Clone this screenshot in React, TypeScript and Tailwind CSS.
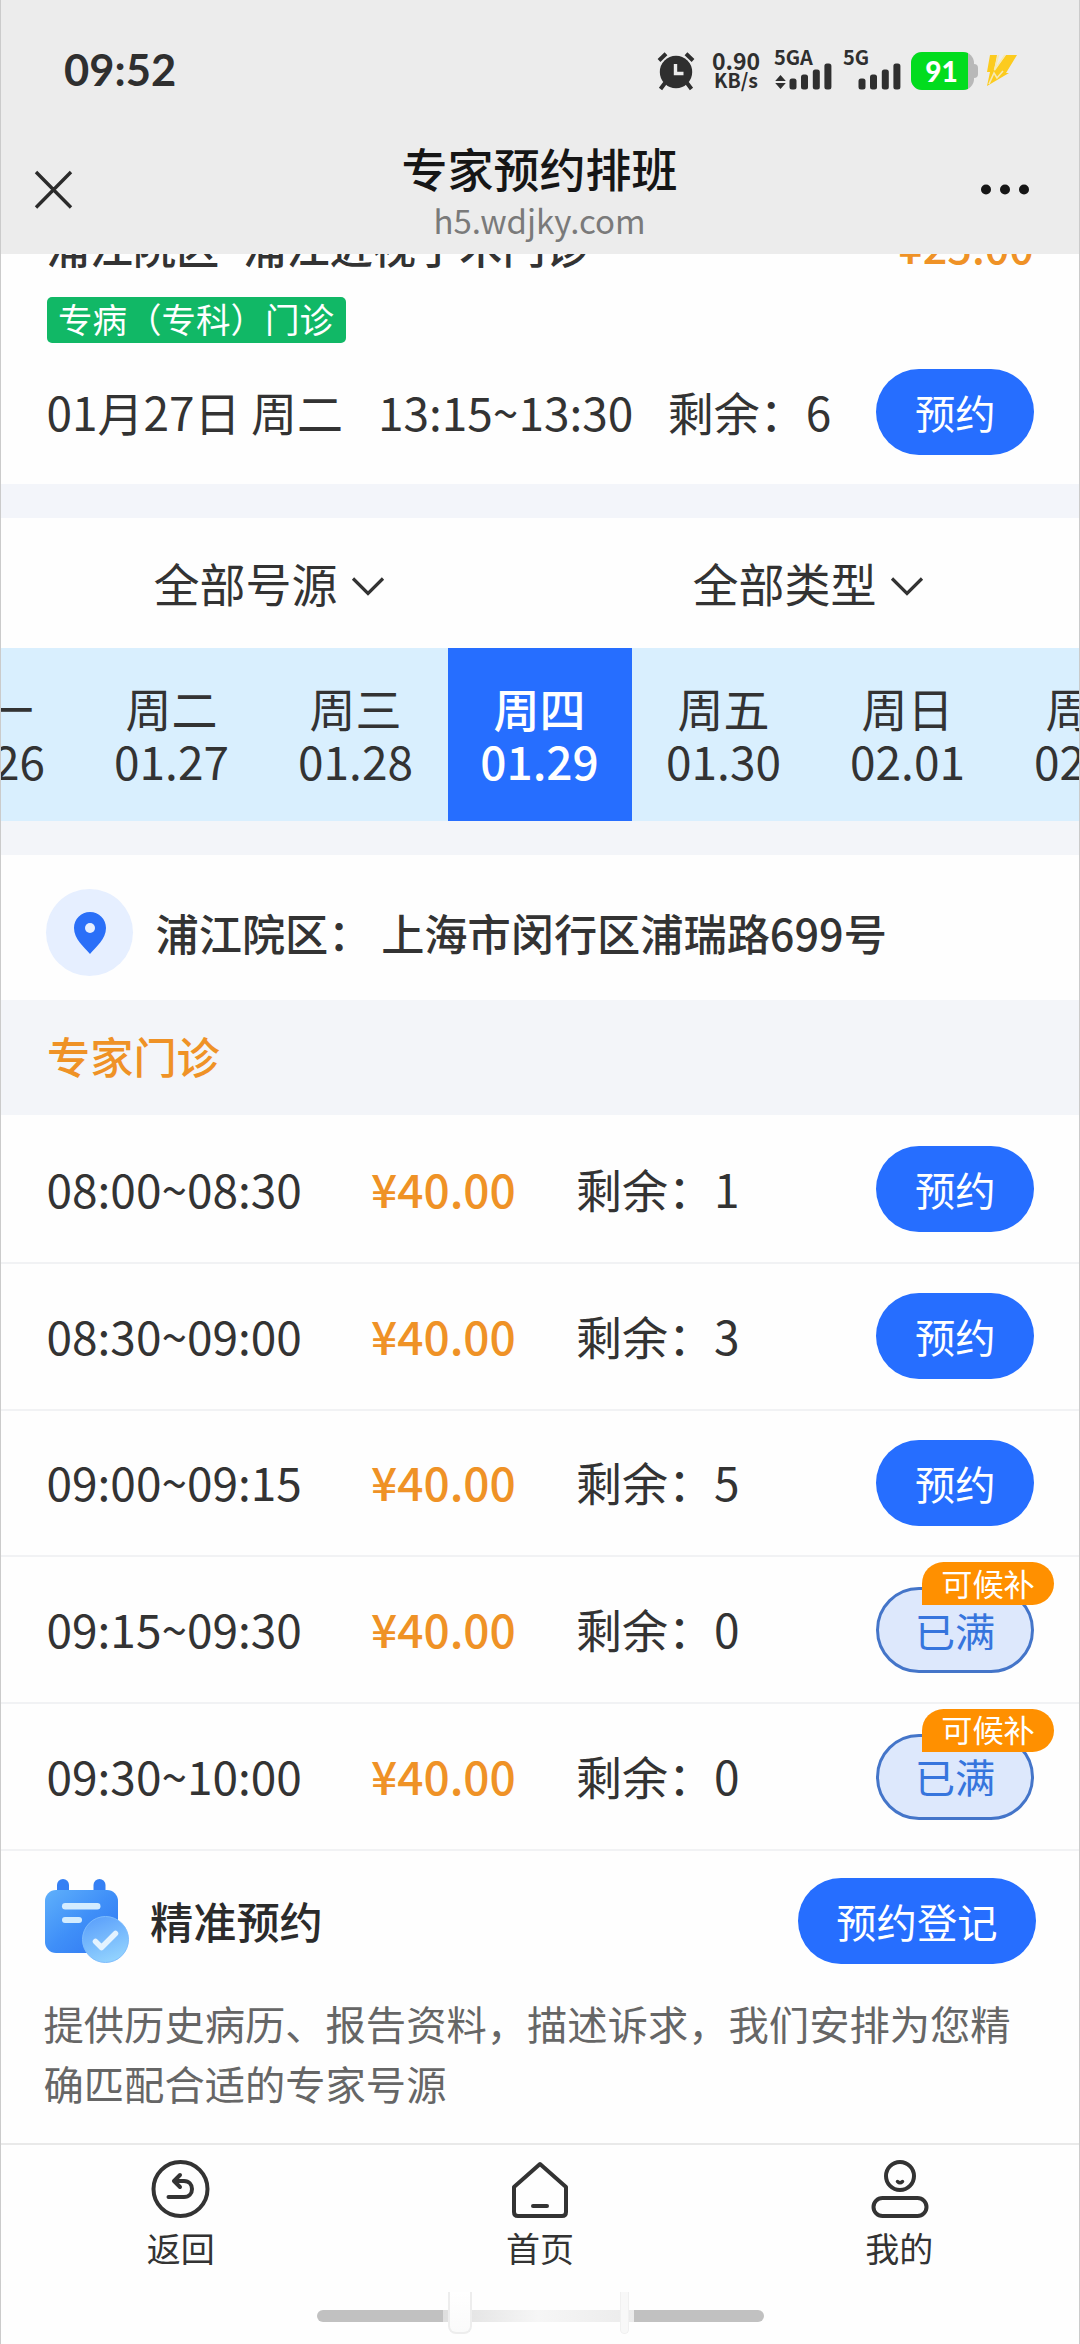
import React from "react";

const slots = [
  { time: "08:00~08:30", left: 1, full: false },
  { time: "08:30~09:00", left: 3, full: false },
  { time: "09:00~09:15", left: 5, full: false },
  { time: "09:15~09:30", left: 0, full: true },
  { time: "09:30~10:00", left: 0, full: true },
];

const days = [
  { day: "周一", date: "01.26" },
  { day: "周二", date: "01.27" },
  { day: "周三", date: "01.28" },
  { day: "周四", date: "01.29", active: true },
  { day: "周五", date: "01.30" },
  { day: "周日", date: "02.01" },
  { day: "周一", date: "02.02" },
];

function Alarm() {
  return (
    <svg width="38" height="40" viewBox="0 0 38 40" fill="none" stroke="#2f2f2f">
      <circle cx="19" cy="21" r="16.2" fill="#2f2f2f" stroke="none" />
      <path d="M2 9.5 L9 2.8 M36 9.5 L29 2.8" strokeWidth="4" />
      <path d="M8 32 L3.5 38 M30 32 L34.5 38" strokeWidth="4" />
      <path d="M18.5 13 V22.5 H26.5" stroke="#ececec" strokeWidth="3.4" />
    </svg>
  );
}

function Bars({ arrows }: { arrows?: boolean }) {
  return (
    <svg width="60" height="27" viewBox="0 0 60 27" fill="#2f2f2f">
      {arrows && <path d="M6.5 12 L11.8 18 H1.2Z M6.5 26 L11.8 20 H1.2Z" />}
      <rect x="15.5" y="15.5" width="7" height="11" rx="2.5" />
      <rect x="27" y="11.5" width="7" height="15" rx="2.5" />
      <rect x="38.8" y="6.5" width="7" height="20" rx="2.5" />
      <rect x="50.4" y="0.5" width="7" height="26" rx="2.5" />
    </svg>
  );
}

function StatusBar() {
  return (
    <div className="flex h-[142px] items-center justify-between pr-[60px] pl-[63px] text-[#2f2f2f]">
      <span className="-mt-[2px] font-['Lato'] text-[43.5px] leading-none font-bold">09:52</span>
      <div className="flex items-center">
        <Alarm />
        <div className="-mt-[4px] ml-[15px] flex w-[52px] flex-col items-center font-['Noto_Sans_CJK_SC'] font-bold">
          <span className="text-[23px] leading-[20px]">0.90</span>
          <span className="text-[19.5px] leading-[19px]">KB/s</span>
        </div>
        <div className="ml-[12px] flex h-[38px] w-[60px] flex-col">
          <span className="h-[11px] font-['Noto_Sans_CJK_SC'] text-[20px] leading-[10px] font-bold">5GA</span>
          <Bars arrows />
        </div>
        <div className="ml-[9px] flex h-[38px] w-[60px] flex-col">
          <span className="h-[11px] font-['Noto_Sans_CJK_SC'] text-[20px] leading-[10px] font-bold">5G</span>
          <Bars />
        </div>
        <div className="ml-[8px] flex items-center">
          <div className="flex h-[38px] w-[63px] overflow-hidden rounded-[11px] bg-[#b8b8b8]">
            <div className="flex w-[57px] items-center justify-center bg-[#02dc1e] pb-[1px] pl-[4px] font-['Lato'] text-[28px] leading-none font-black text-white">
              91
            </div>
          </div>
          <div className="h-[14px] w-[4px] rounded-r-[4px] bg-[#b8b8b8]" />
        </div>
        <svg className="-mt-[2px] ml-[7px]" width="34" height="34" viewBox="0 0 34 34">
          <path d="M5 2 H12 L9 18 L21 2 H32 L21 20 H24 L2 33 L5 19 H2Z" fill="#fccb1e" />
          <path d="M13.5 2 L9.5 17 L20 2 M4 31 L9 20 L12 25 L18 18" fill="none" stroke="#f6e9b4" strokeWidth="1.6" />
        </svg>
      </div>
    </div>
  );
}

function TitleBar() {
  return (
    <div className="flex h-[112px] items-start justify-between px-[32px]">
      <svg className="mt-[27px]" width="42" height="42" viewBox="0 0 42 42" fill="none" stroke="#2b2b2b" strokeWidth="3.4">
        <path d="M3 3 L38 38.500 M38 3 L3 38.500" />
      </svg>
      <div className="flex flex-col items-center pl-[24px]">
        <h1 className="text-[46px] leading-[50px] font-medium text-[#161616]">专家预约排班</h1>
        <span className="text-[33px] leading-[57px] text-[#7a7a7a]">h5.wdjky.com</span>
      </div>
      <svg className="mt-[41px] mr-[17px]" width="50" height="14" viewBox="0 0 50 14" fill="#161616">
        <circle cx="6" cy="6.5" r="5" />
        <circle cx="25" cy="6.5" r="5" />
        <circle cx="44" cy="6.5" r="5" />
      </svg>
    </div>
  );
}

function BookButton({ children }: { children: React.ReactNode }) {
  return (
    <button className="flex h-[86px] items-center justify-center rounded-full bg-[#266eff] px-[38.5px] text-[40.3px] leading-none text-white">
      {children}
    </button>
  );
}

function FullButton() {
  return (
    <div className="relative">
      <button className="flex h-[86px] w-[158px] items-center justify-center rounded-full border-[3px] border-[#4475c9] bg-[#dde8fc] text-[40.3px] leading-none text-[#3675dd]">
        已满
      </button>
      <span className="absolute -top-[25px] left-[46px] flex h-[43px] w-[132px] items-center justify-center rounded-[22px] rounded-bl-none bg-[#ff9000] pb-[2px] text-[31.2px] leading-none text-white">
        可候补
      </span>
    </div>
  );
}

function Filter({ label }: { label: string }) {
  return (
    <div className="flex flex-1 items-center justify-center gap-[13px] pr-[3px] pb-[2px]">
      <span className="text-[46px] leading-none">{label}</span>
      <svg className="mt-[9px]" width="34" height="22" viewBox="0 0 34 22" fill="none" stroke="#333" strokeWidth="3.2">
        <path d="M2 2.5 L17 17.5 L32 2.5" />
      </svg>
    </div>
  );
}

function CalendarIcon() {
  return (
    <svg width="86" height="86" viewBox="0 0 86 86">
      <defs>
        <linearGradient id="sheet" x1="0" y1="0" x2="1" y2="1">
          <stop offset="0" stopColor="#5fb0fb" />
          <stop offset="0.5" stopColor="#3f8ff8" />
          <stop offset="1" stopColor="#2f76f2" />
        </linearGradient>
        <linearGradient id="seal" x1="0.2" y1="0" x2="0.6" y2="1">
          <stop offset="0" stopColor="#5a9ffb" />
          <stop offset="1" stopColor="#93d3fe" />
        </linearGradient>
      </defs>
      <rect x="13" y="1" width="12" height="20" rx="6" fill="#3580f4" />
      <rect x="49.5" y="1" width="12" height="20" rx="6" fill="#3580f4" />
      <rect x="1" y="12" width="73" height="63" rx="11" fill="url(#sheet)" />
      <rect x="18" y="25" width="38.500" height="6.500" rx="3.200" fill="#d3ecff" />
      <rect x="18" y="39" width="20" height="6" rx="3" fill="#d3ecff" />
      <circle cx="61.500" cy="61.500" r="23" fill="url(#seal)" stroke="#7dbcfd" strokeWidth="1" />
      <path d="M51.500 63.500 L57.500 69.500 L71.500 55.500" fill="none" stroke="#e4f3ff" strokeWidth="5.500" strokeLinecap="round" strokeLinejoin="round" />
    </svg>
  );
}

function NavItem({ label, children }: { label: string; children: React.ReactNode }) {
  return (
    <div className="flex flex-1 flex-col items-center pt-[14px]">
      <svg width="62" height="62" viewBox="0 0 62 62" fill="none" stroke="#333" strokeWidth="4" strokeLinejoin="round" strokeLinecap="round">
        {children}
      </svg>
      <span className="mt-[6px] text-[34px] leading-[42px]">{label}</span>
    </div>
  );
}

export default function App() {
  return (
    <div className="flex h-[2344px] w-[1080px] flex-col overflow-hidden border-x border-[#cbcbcb] bg-[#fefefe] font-['Noto_Sans_CJK_SC',sans-serif] text-[#333]">
      <header className="relative z-10 h-[254px] shrink-0 bg-[#ececec]">
        <StatusBar />
        <TitleBar />
      </header>

      <section className="h-[230px] shrink-0 pr-[45px] pl-[45.5px]">
        <div className="-mt-[38px] flex h-[60px] items-center justify-between text-[43.2px] leading-none font-medium">
          <div className="flex gap-[24px]">
            <span>浦江院区</span>
            <span>浦江近视手术门诊</span>
          </div>
          <span className="text-[#ef9226]">¥25.00</span>
        </div>
        <div className="mt-[21px] flex h-[46px] w-[299px] items-center justify-center rounded-[5px] bg-[#11b866] pb-[3px] text-[34.5px] leading-none text-white">
          专病（专科）门诊
        </div>
        <div className="mt-[26px] flex h-[86px] items-center text-[46px] leading-none">
          <span className="-mt-[3px]">01月27日 周二</span>
          <span className="-mt-[3px] ml-[35px]">13:15~13:30</span>
          <span className="-mt-[3px] ml-[34.5px]">剩余：6</span>
          <div className="ml-auto">
            <BookButton>预约</BookButton>
          </div>
        </div>
      </section>

      <div className="h-[34px] shrink-0 bg-[#f3f5fa]" />

      <section className="flex h-[130px] shrink-0">
        <Filter label="全部号源" />
        <Filter label="全部类型" />
      </section>

      <section className="flex h-[173px] shrink-0 justify-center overflow-hidden bg-[#d9effe]">
        {days.map((d, i) => (
          <div
            key={i}
            className={
              d.active
                ? "flex w-[184px] shrink-0 flex-col items-center bg-[#266eff] pt-[33px] pr-[1px] text-[46px] leading-[53px] font-medium text-white"
                : "flex w-[184px] shrink-0 flex-col items-center pt-[33px] pr-[1px] text-[46px] leading-[53px]"
            }
          >
            <span>{d.day}</span>
            <span>{d.date}</span>
          </div>
        ))}
      </section>

      <div className="h-[34px] shrink-0 bg-[#f3f5f9]" />

      <section className="flex h-[145px] shrink-0 items-center pt-[10px] pl-[45px]">
        <div className="flex size-[87px] items-center justify-center rounded-full bg-[#e6efff]">
          <svg width="34" height="44" viewBox="0 0 34 44">
            <path d="M17 1 C8 1 1 8 1 17 C1 28 11 36 17 43 C23 36 33 28 33 17 C33 8 26 1 17 1Z" fill="#2a6ff8" />
            <circle cx="17" cy="17" r="5" fill="#e6efff" />
          </svg>
        </div>
        <span className="ml-[22.5px] text-[43.2px] leading-none font-medium">浦江院区： 上海市闵行区浦瑞路699号</span>
      </section>

      <section className="flex h-[115px] shrink-0 items-center bg-[#f3f5f9] pb-[4px] pl-[46px] text-[43.2px] leading-none font-medium text-[#ef9226]">
        专家门诊
      </section>

      <section className="flex shrink-0 flex-col pt-[2px]">
        {slots.map((s) => (
          <div
            key={s.time}
            className="grid h-[146.800px] grid-cols-[324.500px_205px_1fr_auto] items-center border-b-2 border-[#f1f2f4] pr-[45px] pl-[45.5px] text-[46px] leading-none"
          >
            <span className="-mt-[3px]">{s.time}</span>
            <span className="-mt-[3px] font-medium text-[#ef9226]">¥40.00</span>
            <span className="-mt-[3px]">剩余：{s.left}</span>
            {s.full ? <FullButton /> : <BookButton>预约</BookButton>}
          </div>
        ))}
      </section>

      <section className="flex-1 pr-[43px] pl-[42.5px]">
        <div className="mt-[27px] flex h-[86px] items-center">
          <CalendarIcon />
          <h2 className="ml-[20.5px] text-[43.2px] leading-none font-medium text-[#2b2b2b]">精准预约</h2>
          <div className="ml-auto">
            <BookButton>预约登记</BookButton>
          </div>
        </div>
        <p className="mt-[29px] w-[970px] text-[40.3px] leading-[60.5px] text-[#666]">
          提供历史病历、报告资料，描述诉求，我们安排为您精确匹配合适的专家号源
        </p>
      </section>

      <nav className="h-[201px] shrink-0 border-t-2 border-[#e9e9e9]">
        <div className="flex h-[165px]">
          <NavItem label="返回">
            <circle cx="30.500" cy="30" r="27" />
            <path d="M18.500 38 H34 C39 38 42 34.500 42 30 C42 25.500 39 22 34 22 H24.500" />
            <path d="M30 16 L24 22 L30 28" />
          </NavItem>
          <NavItem label="首页">
            <path d="M31 5 L57 28 V53 Q57 57 53 57 H9 Q5 57 5 53 V28 Z" />
            <path d="M24 47 H38" />
          </NavItem>
          <NavItem label="我的">
            <circle cx="32" cy="17" r="14" />
            <path d="M29.500 22.500 Q32 25 34.500 22.500" strokeWidth="3.500" />
            <rect x="5.500" y="39" width="53" height="18" rx="9" />
          </NavItem>
        </div>
        <div className="relative mx-auto flex h-[12px] w-[447px] rounded-full bg-[#c1c1c1]">
          <div className="ml-[126px] w-[191px] bg-linear-to-r from-[#dedede] via-[#f6f6f6] to-[#ebebeb]" />
          <div className="absolute -top-[18px] left-[131px] h-[42px] w-[24px] rounded-b-[8px] border-x-2 border-b-2 border-[#ededed] bg-linear-to-b from-white to-[#fafafa]" />
          <div className="absolute -top-[18px] left-[303px] h-[42px] w-[9px] rounded-b-[5px] border-x border-b border-[#f0f0f0] bg-[#f8f8f8]" />
        </div>
      </nav>
    </div>
  );
}
